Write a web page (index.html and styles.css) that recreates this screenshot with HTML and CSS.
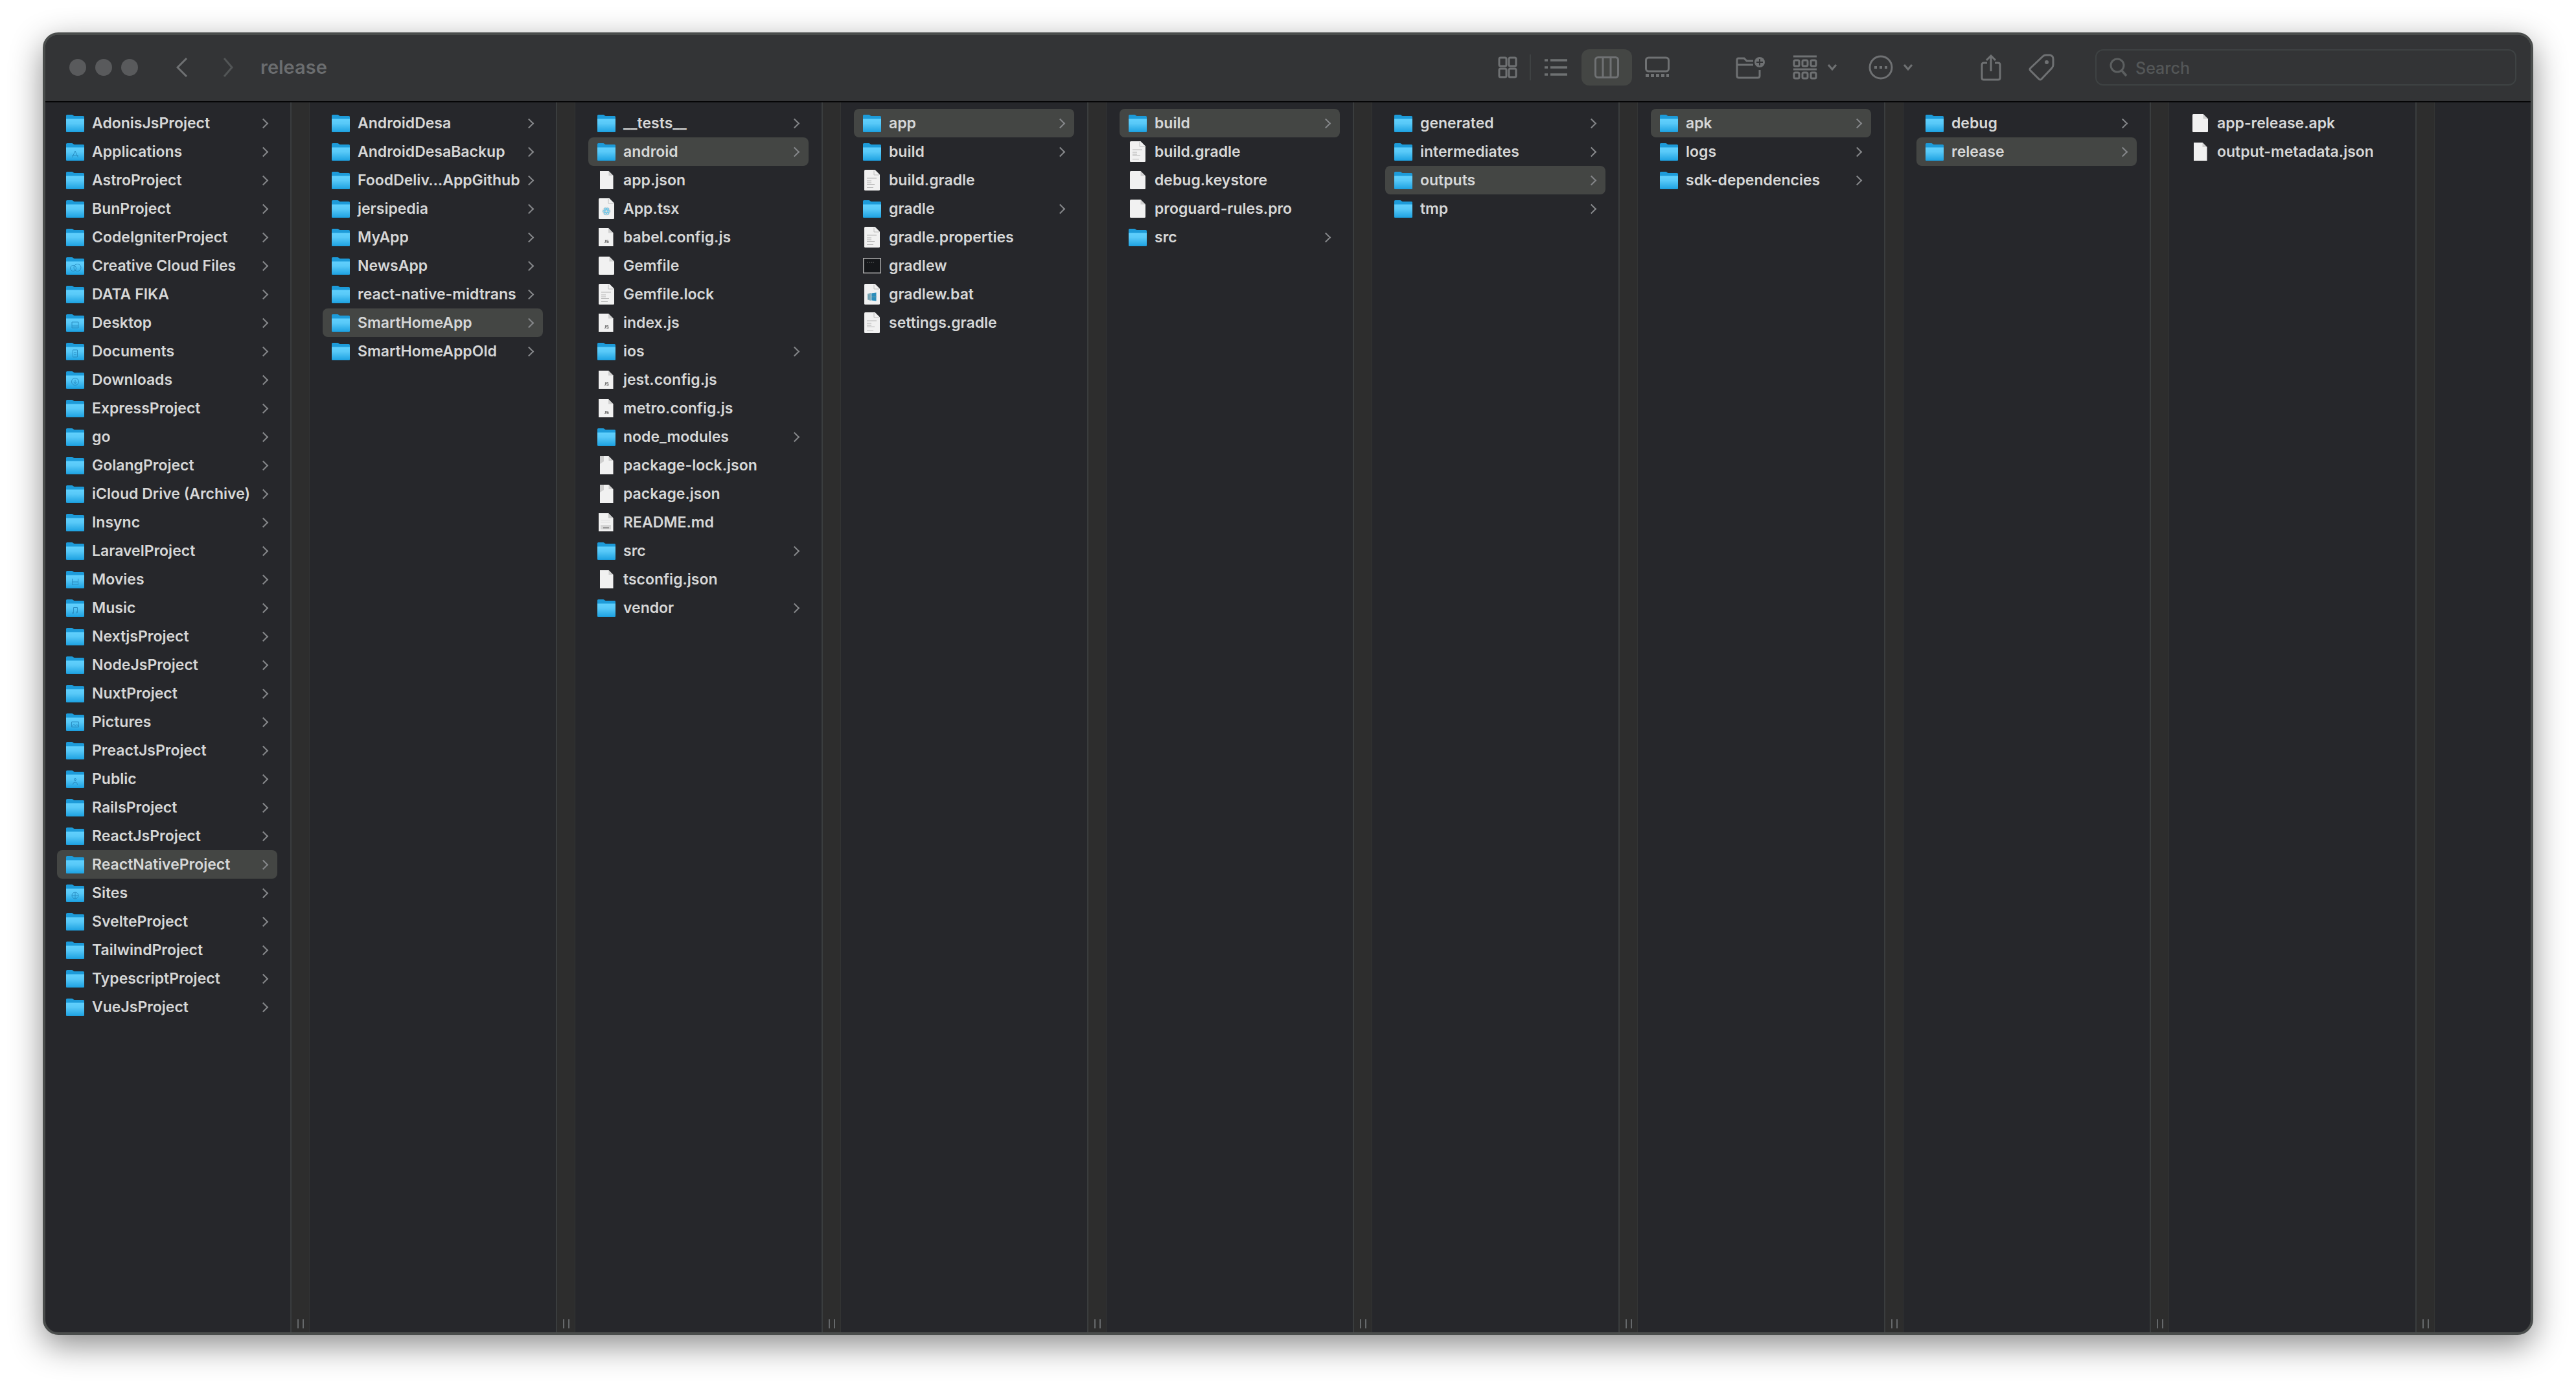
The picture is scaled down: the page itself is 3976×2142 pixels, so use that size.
FILE: index.html
```html
<!DOCTYPE html>
<html lang="en">
<head>
<meta charset="utf-8">
<title>release</title>
<link rel="stylesheet" href="styles.css">
</head>
<body>
<svg class="sprite" aria-hidden="true">
  <defs>
    <linearGradient id="folder-fill" x1="0" y1="0" x2="0" y2="1">
      <stop offset="0" stop-color="#61d0fd"/><stop offset=".35" stop-color="#58c9f8"/><stop offset="1" stop-color="#1fa3e2"/>
    </linearGradient>
    <symbol id="folder" viewBox="0 0 28 32">
      <path d="M0 4.500q0-1.500 1.500-1.500h7.500q1 0 1.700.7l.6.600q.7.700 1.700.700H26.500q1.500 0 1.500 1.500V28.500q0 1.500-1.500 1.500h-25Q0 30 0 28.500z" fill="#1d9bd9"/>
      <path d="M0 9.500h28V28.500q0 1-1 1H1q-1 0-1-1z" fill="url(#folder-fill)"/>
    </symbol>
    <symbol id="sheet" viewBox="0 0 28 32">
      <path d="M2 3.500Q2 2 3.500 2H18.500L26 9.500V28.500q0 1.500-1.500 1.500h-21Q2 30 2 28.500z" fill="#f1f1f1"/>
      <path d="M18.500 2L26 9.500H18.500z" fill="#d0d0d0"/>
    </symbol>
    <symbol id="narrow" viewBox="0 0 28 32">
      <path d="M4 2H17.500L24.500 9V30H4z" fill="#f1f1f1"/>
      <path d="M17.500 2L24.500 9H17.500z" fill="#d0d0d0"/>
    </symbol>
    <symbol id="package" viewBox="0 0 28 32">
      <use href="#narrow"/><path d="M4 2h6v8l-6 4z" fill="#cfcfcf"/>
    </symbol>
    <symbol id="js" viewBox="0 0 28 32">
      <path d="M2 2H17L24.500 9.500V30H2z" fill="#f1f1f1"/>
      <path d="M17 2L24.500 9.500H17z" fill="#d0d0d0"/>
      <path d="M12.500 20v3.500q0 1-1.500 1M17 20.500h-2.500v1.800h2.300v2h-2.600" fill="none" stroke="#777" stroke-width="1.200"/>
    </symbol>
    <symbol id="markdown" viewBox="0 0 28 32">
      <path d="M2 2H17L24.500 9.500V30H2z" fill="#f1f1f1"/>
      <path d="M17 2L24.500 9.500H17z" fill="#c8c8c8"/>
      <path d="M5 20h16v7H5z" fill="#d5d5d5"/><path d="M9 23h9v2.500H9z" fill="#999"/>
      <path d="M5 13h15M5 16h15" stroke="#e0e0e0"/>
    </symbol>
    <symbol id="tall" viewBox="0 0 28 32">
      <path d="M2 1.500Q2 0 3.500 0H18.500L26 7.500V30.500q0 1.500-1.500 1.500h-21Q2 32 2 30.500z" fill="#f1f1f1"/>
      <path d="M17 1v7h8" fill="none" stroke="#bdbdbd"/>
    </symbol>
    <symbol id="text" viewBox="0 0 28 32">
      <use href="#tall"/>
      <path d="M6 13h15M6 17h7M6 20h7M6 22.500h12M6 27.500h10" stroke="#b4b4b4"/>
    </symbol>
    <symbol id="react" viewBox="0 0 28 32">
      <use href="#tall"/>
      <circle cx="14" cy="20" r="6.500" fill="#dadada"/>
      <g fill="none" stroke="#62c5ea"><ellipse cx="14" cy="20" rx="5.500" ry="2.200"/><ellipse cx="14" cy="20" rx="5.500" ry="2.200" transform="rotate(60 14 20)"/><ellipse cx="14" cy="20" rx="5.500" ry="2.200" transform="rotate(120 14 20)"/></g>
    </symbol>
    <symbol id="batch" viewBox="0 0 28 32">
      <use href="#tall"/>
      <path d="M7 15.500L12 14v12l-5-1.500z" fill="#7fa9b8"/><path d="M13 14.500l7.500-1v13l-7.500-1z" fill="#2c8ebb"/><path d="M9 17v6M13 20h7.500" stroke="#5f98ad"/>
    </symbol>
    <symbol id="terminal" viewBox="0 0 28 32">
      <path d="M.750 4.750h26.500v22.500H.750z" fill="#15171a" stroke="#a8a8a8" stroke-width="1.500"/>
      <path d="M6 10.500h11" stroke="#777" stroke-dasharray="2 1"/>
    </symbol>
    <symbol id="g-apps" viewBox="0 0 28 32"><path d="M9.500 25L14 15l4.500 10M9 22h10" /></symbol>
    <symbol id="g-cloud" viewBox="0 0 28 32"><circle cx="11" cy="20" r="4.500"/><circle cx="17.500" cy="19" r="5.500"/></symbol>
    <symbol id="g-desktop" viewBox="0 0 28 32"><path d="M9 15h10v9H9zM9 21h10"/></symbol>
    <symbol id="g-doc" viewBox="0 0 28 32"><path d="M10.500 14h7v11h-7zM12 21h4M12 18h4"/></symbol>
    <symbol id="g-down" viewBox="0 0 28 32"><circle cx="14" cy="19" r="5.500"/><path d="M14 16v6M11.500 19.500L14 22l2.500-2.500"/></symbol>
    <symbol id="g-movie" viewBox="0 0 28 32"><path d="M9.500 15v10M18.500 15v10M9.500 20h9M9.500 24.500h9"/></symbol>
    <symbol id="g-music" viewBox="0 0 28 32"><path d="M11.500 24v-8.500h6V23"/><circle cx="10.500" cy="24" r="1"/><circle cx="16.500" cy="23" r="1"/></symbol>
    <symbol id="g-picture" viewBox="0 0 28 32"><path d="M8.500 16h11v8h-11zM9 23l3-3 2.500 2 2-2 3 3"/></symbol>
    <symbol id="g-public" viewBox="0 0 28 32"><circle cx="14" cy="17" r="1.500"/><path d="M10.500 25q0-4 3.500-4t3.500 4"/></symbol>
    <symbol id="g-sites" viewBox="0 0 28 32"><circle cx="14" cy="20" r="5"/><path d="M9 20h10M14 15v10"/></symbol>
  </defs>
</svg>

<main class="window">
  <header class="toolbar">
    <div class="lights">
      <button aria-label="Close"></button><button aria-label="Minimize"></button><button aria-label="Zoom"></button>
    </div>
    <nav class="history">
      <button class="tool" aria-label="Back"><svg width="18" height="32" viewBox="0 0 18 32"><path d="M16 2L2 16l14 14" stroke-width="3"/></svg></button>
      <button class="tool faint" aria-label="Forward"><svg width="18" height="32" viewBox="0 0 18 32"><path d="M2 2l12 14L2 30" stroke-width="3"/></svg></button>
    </nav>
    <h1>release</h1>
    <div class="views">
      <button class="tool segment first" aria-label="Icons"><svg width="30" height="34" viewBox="0 0 30 34"><rect x="2" y="2" width="11" height="13" rx="2"/><rect x="17" y="2" width="11" height="13" rx="2"/><rect x="2" y="19" width="11" height="13" rx="2"/><rect x="17" y="19" width="11" height="13" rx="2"/></svg></button>
      <button class="tool segment" aria-label="List"><svg width="36" height="28" viewBox="0 0 36 28"><path d="M0 3h5M0 14h5M0 25h5M9 3h26M9 14h26M9 25h26" stroke-width="3.500"/></svg></button>
      <button class="tool segment on" aria-label="Columns"><svg width="38" height="34" viewBox="0 0 38 34"><rect x="1.500" y="1.500" width="35" height="31" rx="4"/><path d="M13 2v30M25 2v30"/></svg></button>
      <button class="tool segment" aria-label="Gallery"><svg width="38" height="34" viewBox="0 0 38 34"><rect x="1.500" y="2" width="35" height="21" rx="4"/><path d="M1 29.500h5M9 29.500h5M17 29.500h5M25 29.500h5M33 29.500h4" stroke-width="5"/></svg></button>
    </div>
    <button class="tool" aria-label="New Folder"><svg width="46" height="36" viewBox="0 0 46 36"><path d="M27 8H17l-4-4H4Q2 4 2 7v24q0 3 3 3h29q3 0 3-3V22M2 14h25"/><circle cx="37" cy="10" r="8" fill="#6f7173" stroke="none"/><path d="M37 5v10M32 10h10" stroke="#333436" stroke-width="2"/></svg></button>
    <button class="tool group" aria-label="Group"><svg width="38" height="38" viewBox="0 0 38 38"><path d="M1 2h36M1 22h36"/><rect x="2" y="8" width="8" height="9" rx="2"/><rect x="15" y="8" width="8" height="9" rx="2"/><rect x="28" y="8" width="8" height="9" rx="2"/><rect x="2" y="27" width="8" height="9" rx="2"/><rect x="15" y="27" width="8" height="9" rx="2"/><rect x="28" y="27" width="8" height="9" rx="2"/></svg><svg width="16" height="12" viewBox="0 0 16 12"><path d="M2 2l6 7 6-7" stroke-width="3"/></svg></button>
    <button class="tool group" aria-label="Actions"><svg width="38" height="38" viewBox="0 0 38 38"><circle cx="19" cy="19" r="17"/><path d="M9 19h4M17 19h4M25 19h4" stroke-width="4"/></svg><svg width="16" height="12" viewBox="0 0 16 12"><path d="M2 2l6 7 6-7" stroke-width="3"/></svg></button>
    <div class="share">
      <button class="tool" aria-label="Share"><svg width="32" height="42" viewBox="0 0 32 42"><path d="M10 14H5q-3 0-3 3v20q0 3 3 3h22q3 0 3-3V17q0-3-3-3h-5M16 27V3M9 10l7-7 7 7"/></svg></button>
      <button class="tool" aria-label="Tags"><svg width="40" height="42" viewBox="0 0 40 42"><path d="M22 4L3 22q-2 2 0 4l13 13q2 2 4 0L36 22q2-2 2-5V8q0-5-5-6h-6q-3 0-5 2z"/><circle cx="28" cy="13" r="1.500"/></svg></button>
    </div>
    <label class="search"><svg width="28" height="30" viewBox="0 0 28 30"><circle cx="12" cy="12" r="10"/><path d="M19 20l7 8" stroke-width="3.500"/></svg><input type="search" placeholder="Search" aria-label="Search"></label>
  </header>

  <div class="columns">
    <section class="column"><ul>
      <li><a class="dir" href="#"><svg><use href="#folder"/></svg>AdonisJsProject</a></li>
      <li><a class="dir" href="#"><svg><use href="#folder"/><use href="#g-apps"/></svg>Applications</a></li>
      <li><a class="dir" href="#"><svg><use href="#folder"/></svg>AstroProject</a></li>
      <li><a class="dir" href="#"><svg><use href="#folder"/></svg>BunProject</a></li>
      <li><a class="dir" href="#"><svg><use href="#folder"/></svg>CodeIgniterProject</a></li>
      <li><a class="dir" href="#"><svg><use href="#folder"/><use href="#g-cloud"/></svg>Creative Cloud Files</a></li>
      <li><a class="dir" href="#"><svg><use href="#folder"/></svg>DATA FIKA</a></li>
      <li><a class="dir" href="#"><svg><use href="#folder"/><use href="#g-desktop"/></svg>Desktop</a></li>
      <li><a class="dir" href="#"><svg><use href="#folder"/><use href="#g-doc"/></svg>Documents</a></li>
      <li><a class="dir" href="#"><svg><use href="#folder"/><use href="#g-down"/></svg>Downloads</a></li>
      <li><a class="dir" href="#"><svg><use href="#folder"/></svg>ExpressProject</a></li>
      <li><a class="dir" href="#"><svg><use href="#folder"/></svg>go</a></li>
      <li><a class="dir" href="#"><svg><use href="#folder"/></svg>GolangProject</a></li>
      <li><a class="dir" href="#"><svg><use href="#folder"/></svg>iCloud Drive (Archive)</a></li>
      <li><a class="dir" href="#"><svg><use href="#folder"/></svg>Insync</a></li>
      <li><a class="dir" href="#"><svg><use href="#folder"/></svg>LaravelProject</a></li>
      <li><a class="dir" href="#"><svg><use href="#folder"/><use href="#g-movie"/></svg>Movies</a></li>
      <li><a class="dir" href="#"><svg><use href="#folder"/><use href="#g-music"/></svg>Music</a></li>
      <li><a class="dir" href="#"><svg><use href="#folder"/></svg>NextjsProject</a></li>
      <li><a class="dir" href="#"><svg><use href="#folder"/></svg>NodeJsProject</a></li>
      <li><a class="dir" href="#"><svg><use href="#folder"/></svg>NuxtProject</a></li>
      <li><a class="dir" href="#"><svg><use href="#folder"/><use href="#g-picture"/></svg>Pictures</a></li>
      <li><a class="dir" href="#"><svg><use href="#folder"/></svg>PreactJsProject</a></li>
      <li><a class="dir" href="#"><svg><use href="#folder"/><use href="#g-public"/></svg>Public</a></li>
      <li><a class="dir" href="#"><svg><use href="#folder"/></svg>RailsProject</a></li>
      <li><a class="dir" href="#"><svg><use href="#folder"/></svg>ReactJsProject</a></li>
      <li><a class="dir open" href="#"><svg><use href="#folder"/></svg>ReactNativeProject</a></li>
      <li><a class="dir" href="#"><svg><use href="#folder"/><use href="#g-sites"/></svg>Sites</a></li>
      <li><a class="dir" href="#"><svg><use href="#folder"/></svg>SvelteProject</a></li>
      <li><a class="dir" href="#"><svg><use href="#folder"/></svg>TailwindProject</a></li>
      <li><a class="dir" href="#"><svg><use href="#folder"/></svg>TypescriptProject</a></li>
      <li><a class="dir" href="#"><svg><use href="#folder"/></svg>VueJsProject</a></li>
    </ul><div class="gutter"><i></i><i></i></div></section>

    <section class="column"><ul>
      <li><a class="dir" href="#"><svg><use href="#folder"/></svg>AndroidDesa</a></li>
      <li><a class="dir" href="#"><svg><use href="#folder"/></svg>AndroidDesaBackup</a></li>
      <li><a class="dir" href="#"><svg><use href="#folder"/></svg>FoodDeliv…AppGithub</a></li>
      <li><a class="dir" href="#"><svg><use href="#folder"/></svg>jersipedia</a></li>
      <li><a class="dir" href="#"><svg><use href="#folder"/></svg>MyApp</a></li>
      <li><a class="dir" href="#"><svg><use href="#folder"/></svg>NewsApp</a></li>
      <li><a class="dir" href="#"><svg><use href="#folder"/></svg>react-native-midtrans</a></li>
      <li><a class="dir open" href="#"><svg><use href="#folder"/></svg>SmartHomeApp</a></li>
      <li><a class="dir" href="#"><svg><use href="#folder"/></svg>SmartHomeAppOld</a></li>
    </ul><div class="gutter"><i></i><i></i></div></section>

    <section class="column"><ul>
      <li><a class="dir" href="#"><svg><use href="#folder"/></svg>__tests__</a></li>
      <li><a class="dir open" href="#"><svg><use href="#folder"/></svg>android</a></li>
      <li><a href="#"><svg><use href="#narrow"/></svg>app.json</a></li>
      <li><a href="#"><svg><use href="#react"/></svg>App.tsx</a></li>
      <li><a href="#"><svg><use href="#js"/></svg>babel.config.js</a></li>
      <li><a href="#"><svg><use href="#sheet"/></svg>Gemfile</a></li>
      <li><a href="#"><svg><use href="#text"/></svg>Gemfile.lock</a></li>
      <li><a href="#"><svg><use href="#js"/></svg>index.js</a></li>
      <li><a class="dir" href="#"><svg><use href="#folder"/></svg>ios</a></li>
      <li><a href="#"><svg><use href="#js"/></svg>jest.config.js</a></li>
      <li><a href="#"><svg><use href="#js"/></svg>metro.config.js</a></li>
      <li><a class="dir" href="#"><svg><use href="#folder"/></svg>node_modules</a></li>
      <li><a href="#"><svg><use href="#package"/></svg>package-lock.json</a></li>
      <li><a href="#"><svg><use href="#package"/></svg>package.json</a></li>
      <li><a href="#"><svg><use href="#markdown"/></svg>README.md</a></li>
      <li><a class="dir" href="#"><svg><use href="#folder"/></svg>src</a></li>
      <li><a href="#"><svg><use href="#narrow"/></svg>tsconfig.json</a></li>
      <li><a class="dir" href="#"><svg><use href="#folder"/></svg>vendor</a></li>
    </ul><div class="gutter"><i></i><i></i></div></section>

    <section class="column"><ul>
      <li><a class="dir open" href="#"><svg><use href="#folder"/></svg>app</a></li>
      <li><a class="dir" href="#"><svg><use href="#folder"/></svg>build</a></li>
      <li><a href="#"><svg><use href="#text"/></svg>build.gradle</a></li>
      <li><a class="dir" href="#"><svg><use href="#folder"/></svg>gradle</a></li>
      <li><a href="#"><svg><use href="#text"/></svg>gradle.properties</a></li>
      <li><a href="#"><svg><use href="#terminal"/></svg>gradlew</a></li>
      <li><a href="#"><svg><use href="#batch"/></svg>gradlew.bat</a></li>
      <li><a href="#"><svg><use href="#text"/></svg>settings.gradle</a></li>
    </ul><div class="gutter"><i></i><i></i></div></section>

    <section class="column"><ul>
      <li><a class="dir open" href="#"><svg><use href="#folder"/></svg>build</a></li>
      <li><a href="#"><svg><use href="#text"/></svg>build.gradle</a></li>
      <li><a href="#"><svg><use href="#sheet"/></svg>debug.keystore</a></li>
      <li><a href="#"><svg><use href="#sheet"/></svg>proguard-rules.pro</a></li>
      <li><a class="dir" href="#"><svg><use href="#folder"/></svg>src</a></li>
    </ul><div class="gutter"><i></i><i></i></div></section>

    <section class="column"><ul>
      <li><a class="dir" href="#"><svg><use href="#folder"/></svg>generated</a></li>
      <li><a class="dir" href="#"><svg><use href="#folder"/></svg>intermediates</a></li>
      <li><a class="dir open" href="#"><svg><use href="#folder"/></svg>outputs</a></li>
      <li><a class="dir" href="#"><svg><use href="#folder"/></svg>tmp</a></li>
    </ul><div class="gutter"><i></i><i></i></div></section>

    <section class="column"><ul>
      <li><a class="dir open" href="#"><svg><use href="#folder"/></svg>apk</a></li>
      <li><a class="dir" href="#"><svg><use href="#folder"/></svg>logs</a></li>
      <li><a class="dir" href="#"><svg><use href="#folder"/></svg>sdk-dependencies</a></li>
    </ul><div class="gutter"><i></i><i></i></div></section>

    <section class="column"><ul>
      <li><a class="dir" href="#"><svg><use href="#folder"/></svg>debug</a></li>
      <li><a class="dir open" href="#"><svg><use href="#folder"/></svg>release</a></li>
    </ul><div class="gutter"><i></i><i></i></div></section>

    <section class="column"><ul>
      <li><a href="#"><svg><use href="#sheet"/></svg>app-release.apk</a></li>
      <li><a href="#"><svg><use href="#narrow"/></svg>output-metadata.json</a></li>
    </ul><div class="gutter"><i></i><i></i></div></section>
  </div>
</main>
</body>
</html>
```
FILE: styles.css
```css
* { box-sizing: border-box; }

body {
  margin: 0;
  min-height: 100vh;
  padding: 50px 66px 82px;
  display: flex;
  background: #fff;
  font-family: Inter, "Liberation Sans", sans-serif;
}

.sprite { position: absolute; width: 0; height: 0; }

button {
  margin: 0;
  padding: 0;
  border: 0;
  background: none;
}

.window {
  flex: 1;
  display: flex;
  flex-direction: column;
  overflow: hidden;
  border: 4px solid #4a4d4c;
  border-radius: 24px;
  background: #26272b;
  box-shadow: 0 16px 50px rgba(0, 0, 0, .45);
}

/* Toolbar */
.toolbar {
  display: flex;
  align-items: center;
  height: 104px;
  padding: 0 22px 2px 37px;
  border-bottom: 2px solid #050506;
  background: #333436;
}

.lights { display: flex; gap: 14px; }
.lights button {
  width: 26px;
  height: 26px;
  border-radius: 50%;
  background: #595a5c;
}

.history { display: flex; gap: 54px; margin: 0 40px 0 59px; }

.toolbar h1 {
  flex: 1;
  margin: 0;
  font-size: 29px;
  font-weight: 600;
  line-height: 36px;
  color: #6b6d6f;
}

.tool { display: flex; align-items: center; justify-content: center; }
.tool svg,
.search svg {
  flex: none;
  fill: none;
  stroke: #6f7173;
  stroke-width: 3;
}
.faint svg { stroke: #525556; }

.views { display: flex; align-items: center; margin-right: 82px; }
.segment { width: 78px; height: 56px; border-radius: 12px; }
.segment.first {
  width: 71px;
  height: 40px;
  border-right: 2px solid #3f4243;
  border-radius: 0;
}
.segment.on { background: #444644; }

.group { gap: 15px; margin-left: 42px; }
.group + .group { margin-left: 48px; }

.share { display: flex; gap: 42px; margin: 0 63px 0 104px; }

.search {
  display: flex;
  align-items: center;
  gap: 12px;
  flex: 0 1 650px;
  height: 56px;
  padding: 0 20px;
  border: 2px solid #3e4243;
  border-radius: 12px;
}
.search svg { stroke: #5c5f60; }
.search input {
  flex: 1;
  min-width: 0;
  padding: 2px 0 0;
  border: 0;
  outline: 0;
  background: none;
  font: 500 25px/32px Inter, "Liberation Sans", sans-serif;
}
.search input::placeholder { color: #545758; opacity: 1; }

/* Column browser */
.columns { flex: 1; display: flex; }

.column { display: flex; flex: none; width: 410px; }
.column:first-child { width: 408px; }
.column ul {
  flex: 1;
  min-width: 0;
  margin: 0;
  padding: 10px 20px;
  list-style: none;
}
.column:first-child ul { padding-left: 18px; }

.column a {
  display: flex;
  align-items: center;
  height: 44px;
  padding: 0 16px 0 14px;
  border-radius: 8px;
  color: #d6d7d7;
  font-size: 23px;
  font-weight: 600;
  line-height: 28px;
  text-decoration: none;
  white-space: nowrap;
}
.column a.open { background: #444644; }
.column a svg {
  flex: none;
  width: 28px;
  height: 32px;
  margin-right: 12px;
  fill: none;
  stroke-width: 1;
}
.column a use + use { stroke: #2b8fc4; }

.dir::after {
  content: "";
  flex: none;
  width: 9px;
  height: 9px;
  margin-left: auto;
  border: solid #85878a;
  border-width: 2px 2px 0 0;
  transform: rotate(45deg);
}

.gutter {
  display: flex;
  flex: none;
  align-items: flex-end;
  justify-content: center;
  gap: 6px;
  width: 30px;
  padding-bottom: 6px;
  border-left: 2px solid #3a3d3e;
  border-right: 1px solid #333434;
  background: #2d2d2d;
}
.gutter i { width: 2px; height: 14px; background: #66696b; }
```
